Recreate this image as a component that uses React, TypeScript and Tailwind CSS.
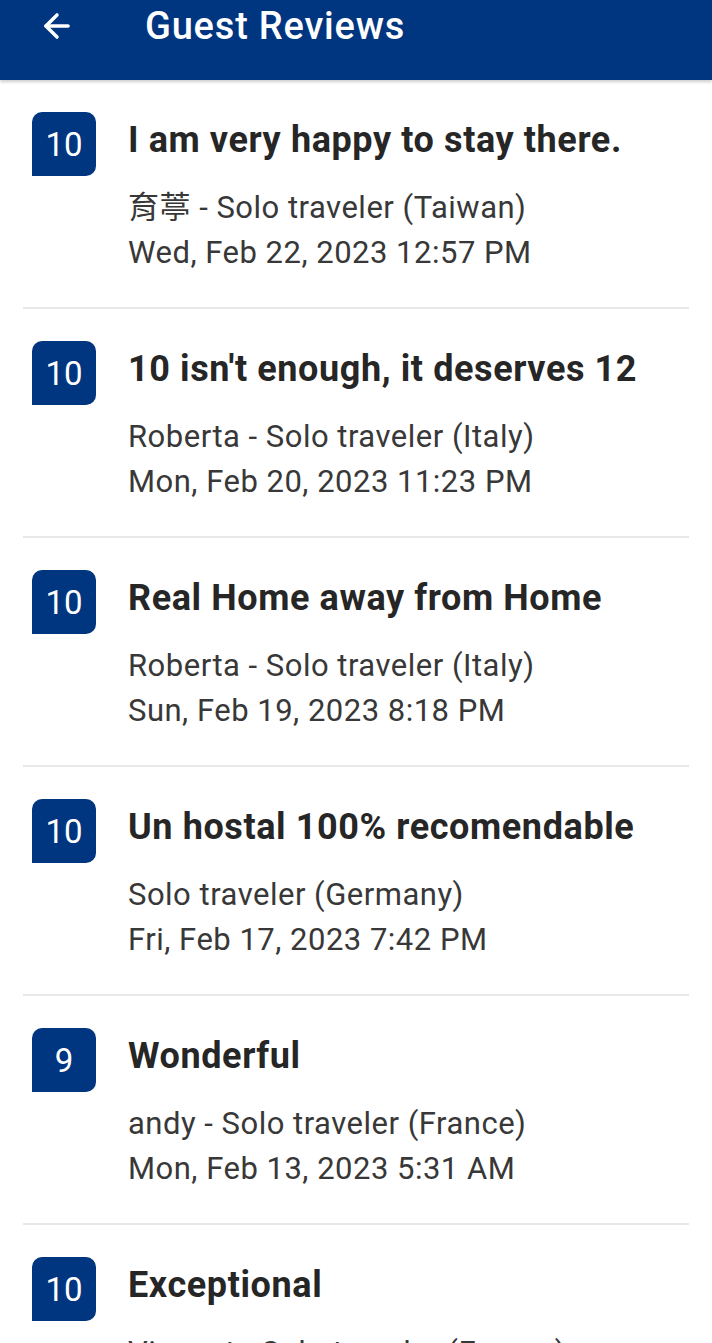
import { ArrowLeft } from "lucide-react";

type Review = {
  score: number;
  title: string;
  author: string;
  date: string;
};

const reviews: Review[] = [
  { score: 10, title: "I am very happy to stay there.", author: "育葶 - Solo traveler (Taiwan)", date: "Wed, Feb 22, 2023 12:57 PM" },
  { score: 10, title: "10 isn't enough, it deserves 12", author: "Roberta - Solo traveler (Italy)", date: "Mon, Feb 20, 2023 11:23 PM" },
  { score: 10, title: "Real Home away from Home", author: "Roberta - Solo traveler (Italy)", date: "Sun, Feb 19, 2023 8:18 PM" },
  { score: 10, title: "Un hostal 100% recomendable", author: "Solo traveler (Germany)", date: "Fri, Feb 17, 2023 7:42 PM" },
  { score: 9, title: "Wonderful", author: "andy - Solo traveler (France)", date: "Mon, Feb 13, 2023 5:31 AM" },
  { score: 10, title: "Exceptional", author: "Vincent - Solo traveler (France)", date: "Sat, Feb 11, 2023 9:04 PM" },
];

export default function App() {
  return (
    <div
      className="w-[712px] h-[1343px] overflow-hidden bg-white"
      style={{ fontFamily: 'Roboto, "Noto Sans CJK TC", sans-serif' }}
    >
      {/* Header */}
      <div className="h-[80px] bg-[#003580] flex items-start shadow-[0_2px_3px_rgba(0,0,0,0.2)] relative z-10">
        <div className="h-[52px] flex items-center pl-[38px]">
          <ArrowLeft size={38} strokeWidth={2.2} className="text-white" />
          <span className="ml-[69px] text-[38px] font-medium text-white tracking-[0.8px]">Guest Reviews</span>
        </div>
      </div>

      {/* Review list */}
      <div>
        {reviews.map((r, i) => (
          <div key={i}>
            <div className="flex pt-[32px] pb-[32px] pl-[32px] pr-[24px]">
              <div className="w-[64px] h-[64px] shrink-0 bg-[#003580] rounded-t-[10px] rounded-br-[10px] flex items-center justify-center">
                <span className="text-white text-[33px] leading-none">{r.score}</span>
              </div>
              <div className="ml-[32px] min-w-0">
                <div className="text-[36px] leading-[56px] font-bold text-[#262626] whitespace-nowrap tracking-[0.6px]">{r.title}</div>
                <div className="mt-[17px] text-[31px] leading-[45px] text-[#383838] whitespace-nowrap tracking-[0.5px]">
                  <div>{r.author}</div>
                  <div>{r.date}</div>
                </div>
              </div>
            </div>
            <div className="mx-[23px] h-[2px] bg-[#e8e8e8]" />
          </div>
        ))}
      </div>
    </div>
  );
}
